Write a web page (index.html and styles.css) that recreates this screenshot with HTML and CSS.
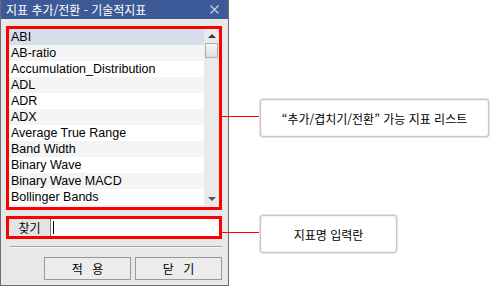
FILE: index.html
```html
<!DOCTYPE html>
<html lang="ko">
  <head>
    <meta charset="UTF-8" />
    <title>지표 추가/전환 - 기술적지표</title>
    <link rel="stylesheet" href="styles.css">
  </head>
  <body>
    <div class="canvas">
      <div class="dialog">
        <div class="titlebar">
          <span class="title">지표 추가/전환 - 기술적지표</span>
          <span class="close">
            <svg width="9" height="9" viewBox="0 0 9 9">
              <path d="M0.5 0.5 L8.5 8.5 M8.5 0.5 L0.5 8.5" stroke="#c8cfe0" stroke-width="1.2" fill="none" />
            </svg>
          </span>
        </div>

        <div class="content">
          <div class="mark list-mark">
            <div class="listbox">
              <ul class="items">
                <li class="selected">ABI</li>
                <li>AB-ratio</li>
                <li>Accumulation_Distribution</li>
                <li>ADL</li>
                <li>ADR</li>
                <li>ADX</li>
                <li>Average True Range</li>
                <li>Band Width</li>
                <li>Binary Wave</li>
                <li>Binary Wave MACD</li>
                <li>Bollinger Bands</li>
                <li>Breadth Advance Decline Index</li>
              </ul>
              <div class="scrollbar">
                <div class="arrow up"></div>
                <div class="thumb"></div>
                <div class="track"></div>
                <div class="arrow down"></div>
              </div>
            </div>
          </div>

          <div class="mark search-mark">
            <div class="search">
              <span class="search-label">찾기</span>
              <span class="search-input"><span class="caret"></span></span>
            </div>
          </div>

          <div class="separator"></div>

          <div class="buttons">
            <button class="btn">적 용</button>
            <button class="btn">닫 기</button>
          </div>
        </div>
      </div>

      <div class="leader leader-list"></div>
      <div class="callout callout-list">“추가/겹치기/전환” 가능 지표 리스트</div>

      <div class="leader leader-search"></div>
      <div class="callout callout-search">지표명 입력란</div>
    </div>
  </body>
</html>
```

FILE: styles.css
```css
body {
  margin: 0;
  background: #ffffff;
  font-family: "Liberation Sans", "Noto Sans CJK KR", sans-serif;
  font-size: 12px;
  color: #000000;
}
.canvas {
  position: relative;
  width: 491px;
  height: 288px;
}
.dialog {
  width: 227px;
  height: 285px;
  background: #e8e8e8;
  border: 1px solid #6e6e6e;
  border-top: none;
}
.titlebar {
  height: 19px;
  background: #3c5a97;
  display: flex;
  align-items: center;
  justify-content: space-between;
  padding: 0 9px 0 5px;
  color: #ffffff;
  font-family: "Noto Sans CJK KR", sans-serif;
  font-size: 12px;
}
.close {
  display: flex;
}
.content {
  padding: 7px 6px 0 5px;
}
.mark {
  border: 3px solid #ff0000;
}
.listbox {
  display: flex;
  height: 178px;
  background: #ffffff;
  overflow: hidden;
}
.items {
  list-style: none;
  margin: 0;
  padding: 0;
  flex: 1;
}
.items li {
  height: 16px;
  line-height: 16px;
  padding-left: 2px;
  white-space: nowrap;
  overflow: hidden;
  font-size: 12.5px;
}
.items li:nth-child(even) {
  background: #f4f4f4;
}
.items li.selected {
  background: #d6deec;
}
.scrollbar {
  width: 15px;
  background: #eaeaea;
  display: flex;
  flex-direction: column;
  align-items: center;
}
.arrow {
  height: 14px;
  width: 15px;
  position: relative;
}
.arrow::after {
  content: "";
  position: absolute;
  left: 4px;
  border-left: 4px solid transparent;
  border-right: 4px solid transparent;
}
.arrow.up::after {
  top: 5px;
  border-bottom: 4px solid #3a3a3a;
}
.arrow.down::after {
  top: 4px;
  border-top: 4px solid #555555;
}
.thumb {
  width: 13px;
  height: 15px;
  background: linear-gradient(#f6f6f6, #dedede);
  border: 1px solid #b0b0b0;
  box-sizing: border-box;
}
.track {
  flex: 1;
}
.search-mark {
  margin-top: 6px;
}
.search {
  display: flex;
  height: 17px;
  background: #ffffff;
}
.search-label {
  width: 41px;
  background: #e4e4e4;
  border-right: 1px solid #7a7a7a;
  text-align: center;
  line-height: 17px;
  font-family: "Noto Sans CJK KR", sans-serif;
}
.search-input {
  flex: 1;
  display: flex;
  align-items: center;
  padding-left: 2px;
}
.caret {
  width: 1px;
  height: 13px;
  background: #000000;
}
.separator {
  margin: 7px 0 0 4px;
  height: 1px;
  background: #a8a8a8;
  border-bottom: 1px solid #f8f8f8;
}
.buttons {
  display: flex;
  justify-content: flex-end;
  gap: 4px;
  margin-top: 9px;
}
.btn {
  width: 87px;
  height: 23px;
  background: #ececec;
  border: 1px solid #9a9a9a;
  font-family: "Noto Sans CJK KR", sans-serif;
  font-size: 12px;
  word-spacing: 6px;
  padding: 0;
  color: #000000;
}
.leader {
  position: absolute;
  height: 1px;
  background: #ff0000;
  left: 221px;
  width: 38px;
}
.leader-list {
  top: 116px;
}
.leader-search {
  top: 232px;
}
.callout {
  position: absolute;
  background: #ffffff;
  border: 1px solid #c6c6c6;
  border-radius: 3px;
  box-shadow: 0 0 0 1px #e6e6e6, inset 0 0 2px #e0e0e0;
  display: flex;
  align-items: center;
  justify-content: center;
  font-family: "Noto Sans CJK KR", sans-serif;
  font-size: 12px;
}
.callout-list {
  left: 260px;
  top: 99px;
  width: 227px;
  height: 36px;
}
.callout-search {
  left: 260px;
  top: 215px;
  width: 135px;
  height: 36px;
}
```
